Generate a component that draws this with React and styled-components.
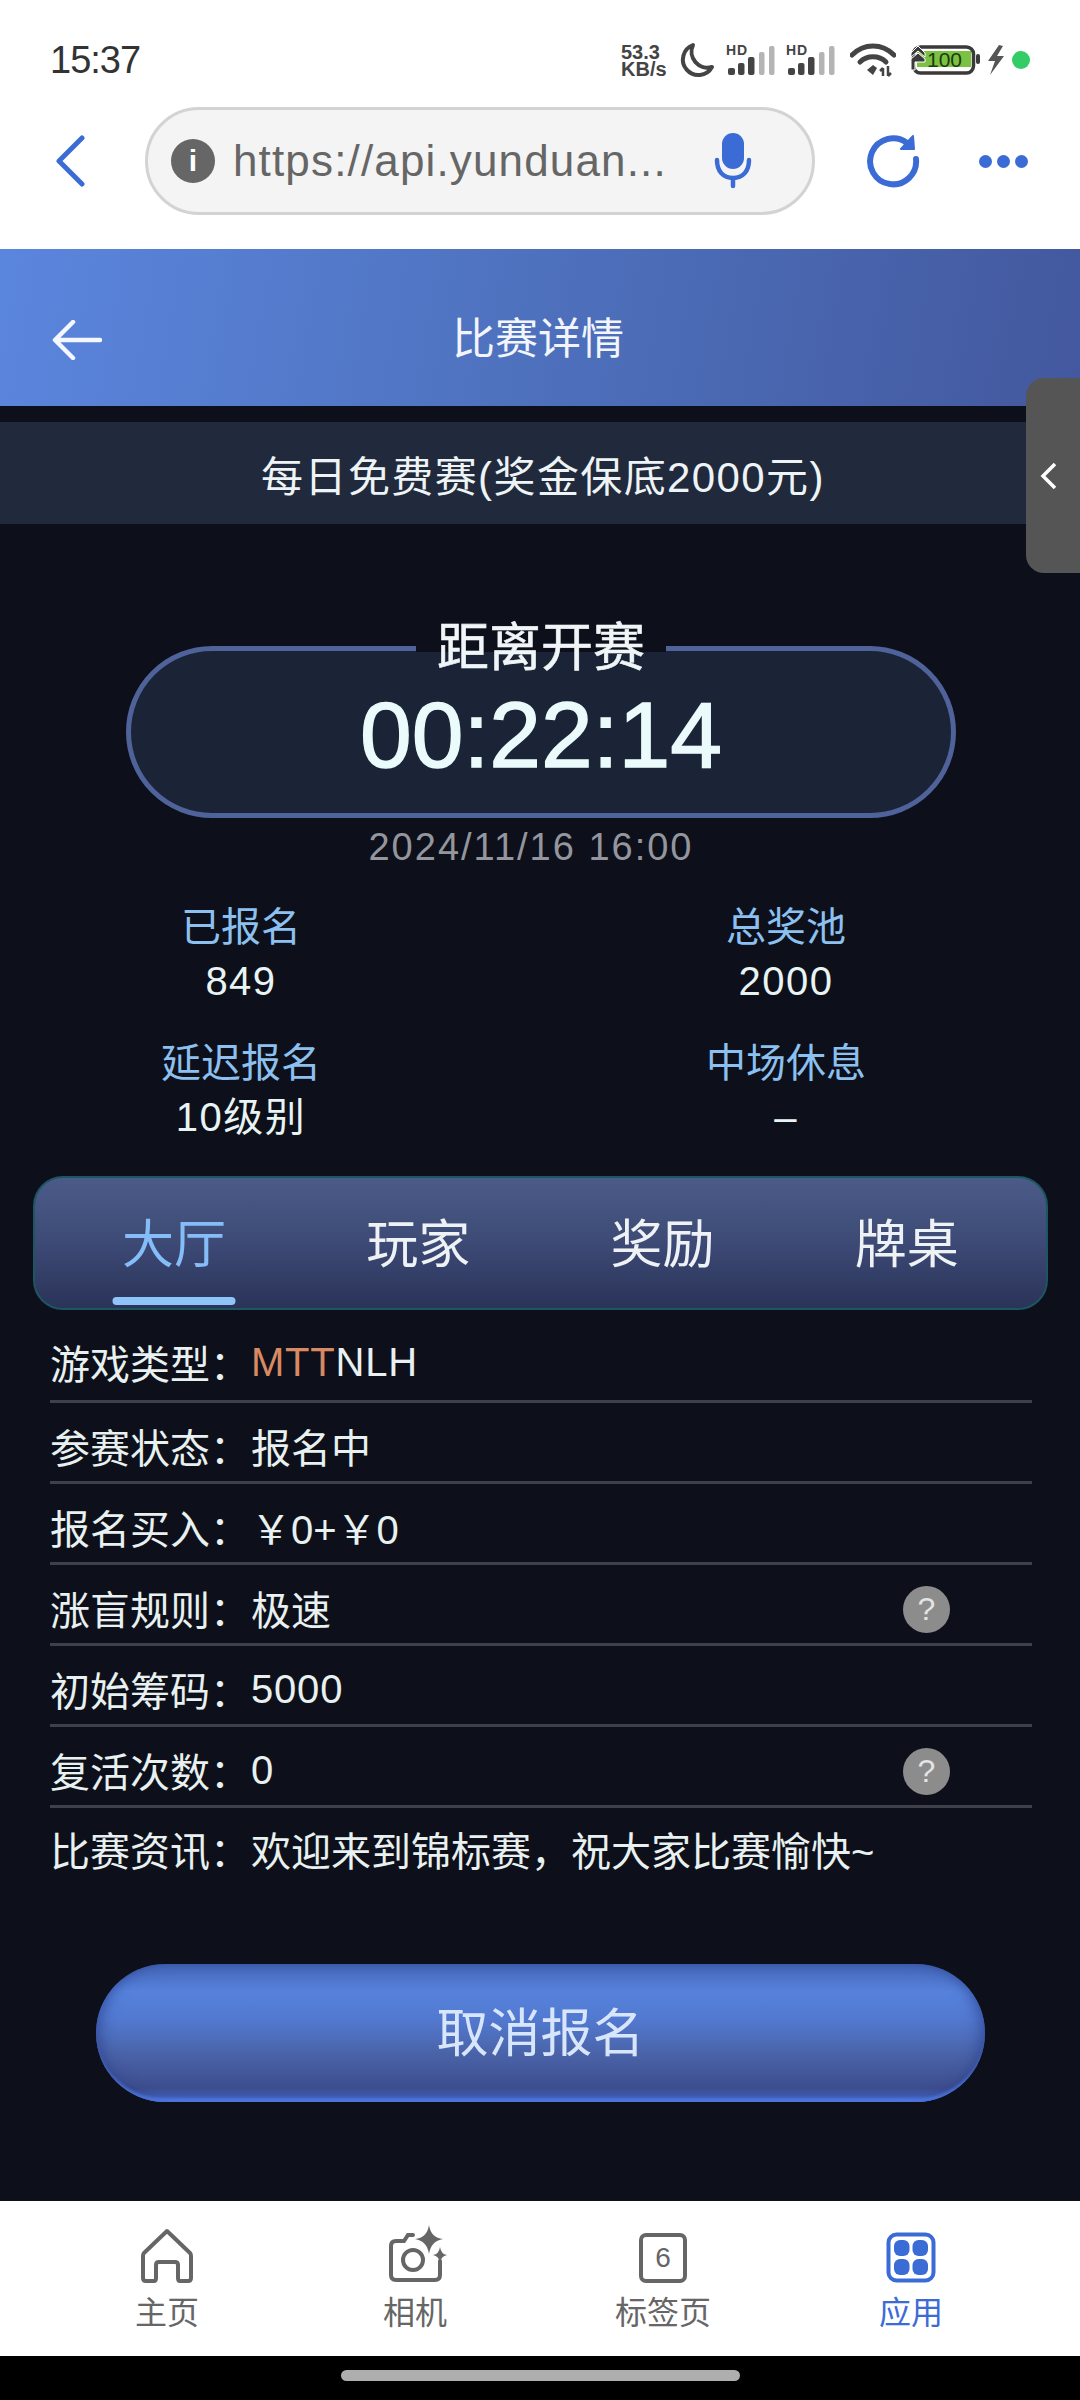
import styled, { createGlobalStyle } from "styled-components";

const GlobalStyle = createGlobalStyle`
    html, body {
        margin: 0;
        padding: 0;
        background: #000;
    }
    * {
        box-sizing: border-box;
    }
    body {
        font-family: "Liberation Sans", "Noto Sans CJK SC", sans-serif;
    }
`;

const Accent = styled.span`
    color: #d98a62;
`;

const rows = [
    { label: "游戏类型：", value: <><Accent>MTT</Accent>NLH</>, digits: true },
    { label: "参赛状态：", value: "报名中" },
    { label: "报名买入：", value: "￥0+￥0" },
    { label: "涨盲规则：", value: "极速", help: true },
    { label: "初始筹码：", value: "5000", digits: true },
    { label: "复活次数：", value: "0", help: true },
    { label: "比赛资讯：", value: "欢迎来到锦标赛，祝大家比赛愉快~" },
];

const stats = [
    { label: "已报名", value: "849" },
    { label: "总奖池", value: "2000" },
    { label: "延迟报名", value: "10级别" },
    { label: "中场休息", value: "–" },
];

const tabs = ["大厅", "玩家", "奖励", "牌桌"];

function SignalIcon() {
    return (
        <svg width="49" height="34" viewBox="0 0 49 34">
            <text x="0" y="12" fontFamily="Liberation Sans" fontSize="14" fontWeight="700" fill="#444" letterSpacing="1">HD</text>
            <rect x="2" y="25" width="7" height="7" rx="2" fill="#444" />
            <rect x="12" y="20" width="6.5" height="12" rx="2" fill="#444" />
            <rect x="22" y="14" width="6.5" height="18" rx="2" fill="#444" />
            <rect x="33" y="9" width="5.5" height="23" rx="2" fill="#b4b4b4" />
            <rect x="43" y="3" width="5.5" height="29" rx="2" fill="#b4b4b4" />
        </svg>
    );
}

function StatusIcons() {
    return (
        <StatusRight>
            <svg width="47" height="38" viewBox="0 0 47 38">
                <text x="0" y="18" fontFamily="Liberation Sans" fontSize="20" fontWeight="700" fill="#444">53.3</text>
                <text x="0" y="35" fontFamily="Liberation Sans" fontSize="20" fontWeight="700" fill="#444">KB/s</text>
            </svg>
            <svg width="36" height="36" viewBox="0 0 36 36">
                <path d="M14 3 A15.5 15.5 0 1 0 33 25 A16 16 0 0 1 14 3 Z" fill="none" stroke="#444" strokeWidth="4" strokeLinejoin="round" />
            </svg>
            <SignalIcon />
            <SignalIcon />
            <WifiIcon width="46" height="36" viewBox="0 0 46 36">
                <path d="M2 13 C14 1 32 1 44 13" fill="none" stroke="#444" strokeWidth="5" strokeLinecap="round" />
                <path d="M10 20 C17 13 29 13 36 20" fill="none" stroke="#444" strokeWidth="5" strokeLinecap="round" />
                <path d="M17 28 L23 23 L27 26 L23 33 Z" fill="#444" />
                <path d="M33 34 V26 M38 34 V24 M30 29 L33 26 M38 34 L41 31" fill="none" stroke="#444" strokeWidth="2.5" />
            </WifiIcon>
            <svg width="70" height="36" viewBox="0 0 70 36">
                <rect x="2.5" y="5" width="60" height="26" rx="7" fill="none" stroke="#3a3a3a" strokeWidth="3.5" />
                <path d="M6 9 H60 V25 H6 Z" fill="#7cc242" />
                <path d="M0 11 L7 4 L14 11 V15 L7 9 L0 15 Z M0 17 L7 11 L14 17 V20 L4 20 V28 H0 Z" fill="#3a3a3a" stroke="#fff" strokeWidth="1" />
                <text x="16" y="25" fontFamily="Liberation Sans" fontSize="21" fill="#1c3a10">100</text>
                <rect x="65" y="12" width="4" height="10" rx="2" fill="#3a3a3a" />
            </svg>
            <BoltIcon width="18" height="30" viewBox="0 0 18 30">
                <path d="M12 0 L1 16 H8 L3 30 L17 11 H10 L16 1 Z" fill="#555" />
            </BoltIcon>
            <GreenDot />
        </StatusRight>
    );
}

function App() {
    return (
        <>
            <GlobalStyle />
            <Screen>
                <StatusBar>
                    <Clock>15:37</Clock>
                    <StatusIcons />
                </StatusBar>
                <BrowserBar>
                    <svg width="30" height="52" viewBox="0 0 30 52">
                        <path d="M27 3 L4 26 L27 49" fill="none" stroke="#3b6cd6" strokeWidth="5" strokeLinecap="round" strokeLinejoin="round" />
                    </svg>
                    <UrlPill>
                        <InfoIcon>i</InfoIcon>
                        <UrlText>https://api.yunduan...</UrlText>
                        <svg width="40" height="56" viewBox="0 0 40 56">
                            <rect x="9" y="0" width="22" height="36" rx="11" fill="#3b6cd6" />
                            <path d="M4 27 C4 38 10 45 20 45 C30 45 36 38 36 27 M20 45 V53" fill="none" stroke="#3b6cd6" strokeWidth="4.5" strokeLinecap="round" />
                        </svg>
                    </UrlPill>
                    <BrowserActions>
                        <svg width="54" height="54" viewBox="0 0 54 54">
                            <path d="M41 9 A23 23 0 1 0 50 25" fill="none" stroke="#3b6cd6" strokeWidth="6" strokeLinecap="round" />
                            <path d="M47 2 L48 15 L35 15 Z" fill="#3b6cd6" stroke="#3b6cd6" strokeWidth="2" strokeLinejoin="round" />
                        </svg>
                        <Dots>
                            <i />
                            <i />
                            <i />
                        </Dots>
                    </BrowserActions>
                </BrowserBar>

                <Page>
                    <Header>
                        <BackArrow width="50" height="40" viewBox="0 0 50 40">
                            <path d="M48 20 H4 M21 2 L3 20 L21 38" fill="none" stroke="#f4f7ff" strokeWidth="4.5" strokeLinecap="round" strokeLinejoin="round" />
                        </BackArrow>
                        比赛详情
                    </Header>
                    <TitleStrip>每日免费赛(奖金保底2000元)</TitleStrip>
                    <SideHandle>
                        <svg width="18" height="28" viewBox="0 0 18 28">
                            <path d="M15 2 L3 14 L15 26" fill="none" stroke="#fff" strokeWidth="3.5" />
                        </svg>
                    </SideHandle>

                    <Countdown>
                        <CountdownLabel>距离开赛</CountdownLabel>
                        <Timer>00:22:14</Timer>
                    </Countdown>
                    <StartDate>2024/11/16 16:00</StartDate>

                    <StatsGrid>
                        {stats.map((stat) => (
                            <Stat key={stat.label}>
                                <StatLabel>{stat.label}</StatLabel>
                                <StatValue>{stat.value}</StatValue>
                            </Stat>
                        ))}
                    </StatsGrid>

                    <TabBar>
                        {tabs.map((tab, idx) => (
                            <Tab key={tab} $active={idx === 0}>
                                {tab}
                            </Tab>
                        ))}
                    </TabBar>

                    <InfoList>
                        {rows.map((row) => (
                            <InfoRow key={row.label}>
                                <span>{row.label}</span>
                                <RowValue $digits={row.digits}>{row.value}</RowValue>
                                {row.help && <HelpBadge>?</HelpBadge>}
                            </InfoRow>
                        ))}
                    </InfoList>

                    <CancelButton>取消报名</CancelButton>
                </Page>

                <BottomNav>
                    <NavItem>
                        <svg width="60" height="60" viewBox="0 0 60 60">
                            <path d="M30 6 L53 28 Q54 29 54 31 V53 Q54 56 51 56 H43 Q41 56 41 53 V40 Q41 37 38 37 H22 Q19 37 19 40 V53 Q19 56 17 56 H9 Q6 56 6 53 V31 Q6 29 7 28 Z" fill="none" stroke="#666" strokeWidth="4" strokeLinejoin="round" />
                        </svg>
                        主页
                    </NavItem>
                    <NavItem>
                        <svg width="65" height="60" viewBox="-5 0 65 60">
                            <path d="M25 10 H20 L16 16 H8 Q3 16 3 21 V50 Q3 55 8 55 H47 Q52 55 52 50 V36" fill="none" stroke="#666" strokeWidth="4" strokeLinecap="round" />
                            <circle cx="25" cy="35" r="10" fill="none" stroke="#666" strokeWidth="4" />
                            <path d="M41 0 Q43 13 55 14 Q43 16 41 29 Q39 16 27 14 Q39 13 41 0 Z" fill="#666" />
                            <path d="M52 22 Q53 29 59 30 Q53 31 52 38 Q51 31 45 30 Q51 29 52 22 Z" fill="#666" />
                        </svg>
                        相机
                    </NavItem>
                    <NavItem>
                        <TabCount>6</TabCount>
                        标签页
                    </NavItem>
                    <NavItem $active>
                        <svg width="60" height="60" viewBox="0 0 60 60">
                            <rect x="7.5" y="9.5" width="45" height="46" rx="8" fill="none" stroke="#3b6cd6" strokeWidth="4" />
                            <rect x="13" y="15" width="15.5" height="16" rx="6" fill="#3b6cd6" />
                            <rect x="31.5" y="15" width="15.5" height="16" rx="6" fill="#3b6cd6" />
                            <rect x="13" y="34" width="15.5" height="16" rx="6" fill="#3b6cd6" />
                            <rect x="31.5" y="34" width="15.5" height="16" rx="6" fill="#3b6cd6" />
                        </svg>
                        应用
                    </NavItem>
                </BottomNav>
                <HomeStrip>
                    <HomeIndicator />
                </HomeStrip>
            </Screen>
        </>
    );
}

const Screen = styled.div`
    width: 1080px;
    height: 2400px;
    display: flex;
    flex-direction: column;
    overflow: hidden;
    background: #fff;
`;

const StatusBar = styled.div`
    height: 100px;
    padding: 20px 50px 0;
    display: flex;
    align-items: center;
    justify-content: space-between;
`;

const Clock = styled.span`
    font-size: 38px;
    letter-spacing: -1px;
    color: #333;
`;

const StatusRight = styled.div`
    display: flex;
    align-items: center;
    gap: 11px;
`;

const WifiIcon = styled.svg`
    margin: 0 4px;
`;

const BoltIcon = styled.svg`
    margin-left: -5px;
`;

const GreenDot = styled.span`
    width: 18px;
    height: 18px;
    margin-left: -4px;
    border-radius: 50%;
    background: #33cc66;
`;

const BrowserBar = styled.div`
    height: 149px;
    padding: 7px 0 34px 55px;
    display: flex;
    align-items: center;
`;

const UrlPill = styled.div`
    width: 670px;
    height: 108px;
    margin-left: 60px;
    padding: 0 59px 0 23px;
    display: flex;
    align-items: center;
    background: #f4f4f4;
    border: 3px solid #d3d3d3;
    border-radius: 54px;
`;

const InfoIcon = styled.span`
    width: 44px;
    height: 44px;
    flex-shrink: 0;
    display: flex;
    align-items: center;
    justify-content: center;
    border-radius: 50%;
    background: #666;
    color: #fff;
    font-size: 30px;
    font-weight: 700;
`;

const UrlText = styled.span`
    flex: 1;
    margin-left: 18px;
    font-size: 44px;
    letter-spacing: 1.15px;
    color: #666;
    white-space: nowrap;
`;

const BrowserActions = styled.div`
    margin-left: 51px;
    display: flex;
    align-items: center;
`;

const Dots = styled.div`
    margin-left: 59px;
    display: flex;
    gap: 5px;
    i {
        width: 13px;
        height: 13px;
        border-radius: 50%;
        background: #3b6cd6;
    }
`;

const Page = styled.main`
    position: relative;
    flex: 1;
    display: flex;
    flex-direction: column;
    background: #0d101a;
`;

const Header = styled.header`
    position: relative;
    height: 157px;
    display: flex;
    align-items: center;
    justify-content: center;
    padding: 14px 4px 0 0;
    background: linear-gradient(100deg, #5b86de 0%, #4f73c0 45%, #43589e 100%);
    font-size: 43px;
    color: #f2f5fc;
`;

const BackArrow = styled.svg`
    position: absolute;
    left: 52px;
    top: 71px;
`;

const TitleStrip = styled.div`
    height: 102px;
    margin-top: 16px;
    padding-left: 6px;
    display: flex;
    align-items: center;
    justify-content: center;
    background: #212a3c;
    font-size: 42px;
    letter-spacing: 1.4px;
    color: #eef4f6;
`;

const SideHandle = styled.div`
    position: absolute;
    top: 129px;
    right: 0;
    width: 54px;
    height: 195px;
    display: flex;
    align-items: center;
    justify-content: center;
    padding-right: 8px;
    background: #555;
    border-radius: 18px 0 0 18px;
`;

const Countdown = styled.div`
    position: relative;
    width: 830px;
    height: 172px;
    margin: 122px 0 0 126px;
    padding-top: 6px;
    display: flex;
    align-items: center;
    justify-content: center;
    background: #1a2436;
    border: 5px solid #4f6299;
    border-radius: 86px;
`;

const CountdownLabel = styled.span`
    position: absolute;
    top: -36px;
    left: 50%;
    transform: translateX(-50%);
    width: 250px;
    height: 60px;
    padding-top: 6px;
    display: flex;
    align-items: center;
    justify-content: center;
    background: linear-gradient(#0d101a 37px, transparent 37px);
    font-size: 52px;
    line-height: 60px;
    color: #f0f6f8;
    -webkit-text-stroke: 0.6px #f0f6f8;
`;

const Timer = styled.span`
    font-size: 93px;
    line-height: 1;
    color: #ebfbfb;
    -webkit-text-stroke: 1.4px #ebfbfb;
`;

const StartDate = styled.div`
    margin-top: 9px;
    padding-right: 18px;
    text-align: center;
    font-size: 38px;
    line-height: 40px;
    letter-spacing: 2px;
    color: #94969d;
`;

const StatsGrid = styled.div`
    margin-top: 35px;
    padding-left: 141px;
    display: grid;
    grid-template-columns: 200px 200px;
    column-gap: 345px;
    row-gap: 32px;
`;

const Stat = styled.div`
    display: flex;
    flex-direction: column;
    align-items: center;
    gap: 4px;
`;

const StatLabel = styled.span`
    font-size: 40px;
    line-height: 50px;
    color: #8cc0f0;
`;

const StatValue = styled.span`
    font-size: 40px;
    line-height: 50px;
    letter-spacing: 1.5px;
    color: #e8f4f4;
`;

const TabBar = styled.nav`
    width: 1015px;
    height: 134px;
    margin: 34px 0 0 33px;
    padding: 0 17px;
    display: grid;
    grid-template-columns: repeat(4, 1fr);
    background: linear-gradient(180deg, #4b5b87 0%, #3d4a76 50%, #2a3358 100%);
    border: 2px solid #1d5563;
    border-radius: 30px;
`;

const Tab = styled.div`
    position: relative;
    display: flex;
    align-items: center;
    justify-content: center;
    padding-bottom: 6px;
    font-size: 52px;
    color: ${(props) => (props.$active ? "#85bdf8" : "#eef2f5")};
    &::after {
        content: "";
        display: ${(props) => (props.$active ? "block" : "none")};
        position: absolute;
        left: 50%;
        bottom: 3px;
        transform: translateX(-50%);
        width: 123px;
        height: 8px;
        border-radius: 4px;
        background: #8fc4fb;
    }
`;

const InfoList = styled.div`
    margin: 12px 48px 0 50px;
    display: flex;
    flex-direction: column;
`;

const InfoRow = styled.div`
    height: 81px;
    padding-top: 8px;
    display: flex;
    align-items: center;
    border-bottom: 3px solid #3e404c;
    font-size: 40px;
    color: #e8f0f0;
    &:first-child {
        padding-top: 2px;
    }
    &:last-child {
        padding-top: 0;
        border-bottom: none;
    }
`;

const RowValue = styled.span`
    margin-left: 1px;
    letter-spacing: ${(props) => (props.$digits ? "0.8px" : "0")};
`;

const HelpBadge = styled.span`
    width: 47px;
    height: 47px;
    margin: 2px 82px 0 auto;
    display: flex;
    align-items: center;
    justify-content: center;
    border-radius: 50%;
    background: #8c8c8c;
    color: #e4e4e4;
    font-size: 32px;
`;

const CancelButton = styled.button`
    width: 889px;
    height: 138px;
    margin: 75px 0 0 96px;
    padding: 0 0 8px;
    border: none;
    border-radius: 69px;
    background: linear-gradient(
        180deg,
        #4465b6 0%,
        #5682dc 20%,
        #5279d0 40%,
        #4a63a8 65%,
        #3d4d8e 90%,
        #3f5aaa 95%,
        #4f7bea 100%
    );
    box-shadow: inset 10px 0 14px -6px rgba(35, 55, 130, 0.6),
        inset -10px 0 14px -6px rgba(35, 55, 130, 0.6),
        inset 0 -4px 3px -1px #5a84f2;
    font-family: inherit;
    font-size: 52px;
    color: #d8e6fb;
`;

const BottomNav = styled.nav`
    height: 155px;
    flex-shrink: 0;
    padding: 24px 45px 0 43px;
    display: grid;
    grid-template-columns: repeat(4, 1fr);
    background: #fff;
`;

const NavItem = styled.div`
    display: flex;
    flex-direction: column;
    align-items: center;
    gap: 10px;
    font-size: 32px;
    line-height: 36px;
    color: ${(props) => (props.$active ? "#3b6cd6" : "#666")};
`;

const TabCount = styled.span`
    width: 48px;
    height: 50px;
    margin: 8px 0 2px;
    display: flex;
    align-items: center;
    justify-content: center;
    border: 4px solid #666;
    border-radius: 7px;
    font-size: 28px;
    line-height: 1;
    color: #666;
`;

const HomeStrip = styled.div`
    height: 44px;
    flex-shrink: 0;
    padding-top: 14px;
    display: flex;
    justify-content: center;
    background: #000;
`;

const HomeIndicator = styled.div`
    width: 399px;
    height: 11px;
    border-radius: 6px;
    background: #aeaeae;
`;

export default App;
